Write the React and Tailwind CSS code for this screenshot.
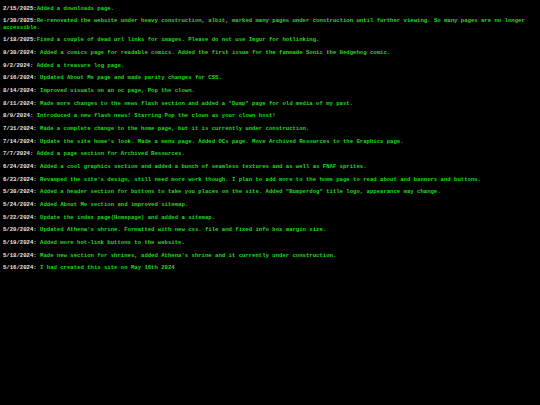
export default function App() {
  const entries = [
    ["2/15/2025:", "Added a downloads page."],
    ["1/30/2025:", "Re-renovated the website under heavy construction, albit, marked many pages under construction until further viewing. So many pages are no longer accessible."],
    ["1/18/2025:", "Fixed a couple of dead url links for images. Please do not use Imgur for hotlinking."],
    ["9/30/2024: ", "Added a comics page for readable comics. Added the first issue for the fanmade Sonic the Hedgehog comic."],
    ["9/2/2024: ", "Added a treasure log page."],
    ["8/16/2024: ", "Updated About Me page and made parity changes for CSS."],
    ["8/14/2024: ", "Improved visuals on an oc page, Pop the clown."],
    ["8/11/2024: ", "Made more changes to the news flash section and added a \"Dump\" page for old media of my past."],
    ["8/9/2024: ", "Introduced a new flash news! Starring Pop the clown as your clown host!"],
    ["7/31/2024: ", "Made a complete change to the home page, but it is currently under construction."],
    ["7/14/2024: ", "Update the site home's look. Made a menu page. Added OCs page. Move Archived Resources to the Graphics page."],
    ["7/7/2024: ", "Added a page section for Archived Resources."],
    ["6/24/2024: ", "Added a cool graphics section and added a bunch of seamless textures and as well as FNAF sprites."],
    ["6/23/2024: ", "Revamped the site's design, still need more work though. I plan to add more to the home page to read about and banners and buttons."],
    ["5/30/2024: ", "Added a header section for buttons to take you places on the site. Added \"Bumperdog\" title logo, appearance may change."],
    ["5/24/2024: ", "Added About Me section and improved sitemap."],
    ["5/22/2024: ", "Update the index page(Homepage) and added a sitemap."],
    ["5/20/2024: ", "Updated Athena's shrine. Formatted with new css. file and fixed info box margin size."],
    ["5/19/2024: ", "Added more hot-link buttons to the website."],
    ["5/18/2024: ", "Made new section for shrines, added Athena's shrine and it currently under construction."],
    ["5/16/2024: ", "I had created this site on May 16th 2024"],
  ];
  return (
    <div className="w-[540px] h-[405px] bg-black overflow-hidden pl-[3px] pr-[3px] pt-[5.6px] font-['Liberation_Mono',monospace] font-bold text-[5.62px] leading-[6.34px]">
      {entries.map(([d, t], i) => (
        <p key={i} className="mb-[6.34px] whitespace-pre-wrap">
          <span className="text-[#e8e8e8]">{d}</span>
          <span className="text-[#1fdc1f]">{t}</span>
        </p>
      ))}
    </div>
  );
}
